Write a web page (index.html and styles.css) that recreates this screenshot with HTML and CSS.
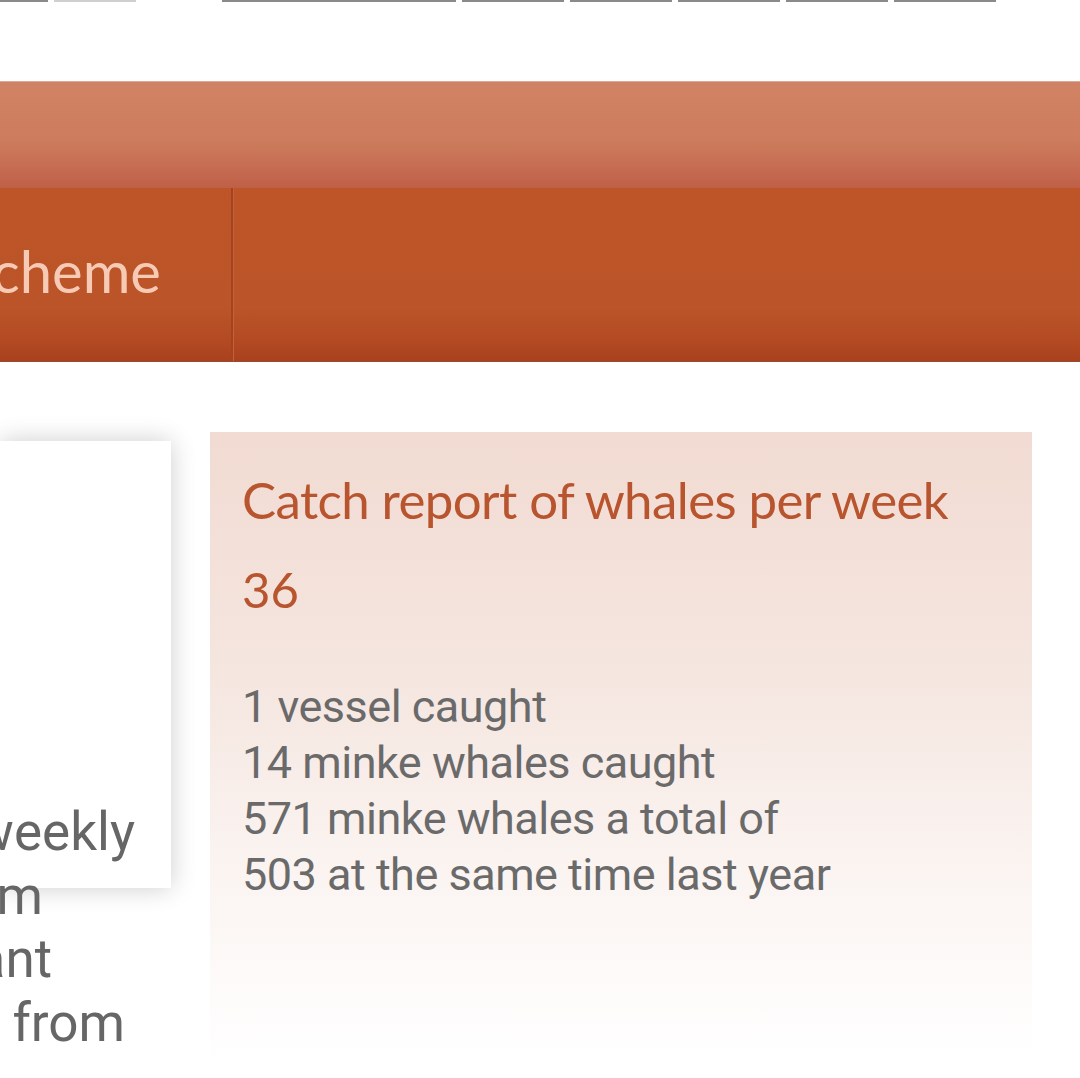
FILE: index.html
```html
<!DOCTYPE html>
<html lang="en">
<head>
<meta charset="utf-8">
<title>Catch report</title>
<link rel="stylesheet" href="styles.css">
</head>
<body>
<div class="topstrip">
  <span class="tab t1"></span>
  <span class="tab t2"></span>
  <span class="tab t3"></span>
  <span class="tab t4"></span>
  <span class="tab t4"></span>
  <span class="tab t4"></span>
  <span class="tab t4"></span>
  <span class="tab t4"></span>
</div>
<header class="banner">
  <div class="banner-top"></div>
  <nav class="navbar">
    <div class="nav-item"><span class="nav-label">Whaling scheme</span></div>
    <div class="nav-rest"></div>
  </nav>
</header>
<main class="main">
  <div class="card">
    <div class="card-text">
      <div class="line l1">The Directorate publishes weekly</div>
      <div class="line l2">reports on the catch from</div>
      <div class="line l3">whaling. This is important</div>
      <div class="line l4">information about quotas from</div>
    </div>
  </div>
  <section class="report">
    <h2 class="report-title">Catch report of whales per week</h2>
    <div class="report-week">36</div>
    <ul class="report-list">
      <li>1 vessel caught</li>
      <li>14 minke whales caught</li>
      <li>571 minke whales a total of</li>
      <li>503 at the same time last year</li>
    </ul>
  </section>
</main>
</body>
</html>
```
FILE: styles.css
```css
html, body {
  margin: 0;
  padding: 0;
  background: #ffffff;
  overflow: hidden;
}
body {
  width: 1080px;
  height: 1078px;
  font-family: Roboto, "Liberation Sans", sans-serif;
}
.topstrip {
  height: 81px;
  display: flex;
  align-items: flex-start;
  gap: 6px;
}
.tab {
  display: block;
  height: 2px;
  background: #8a8a8a;
}
.t1 { width: 48px; }
.t2 { width: 82px; background: #cfcfcf; margin-right: 80px; }
.t3 { width: 234px; }
.t4 { width: 102px; }

.banner {
  height: 281px;
  display: flex;
  flex-direction: column;
}
.banner-top {
  height: 106px;
  border-top: 1px solid #d9ab94;
  background: linear-gradient(to bottom, #d08364 0%, #cd7c5d 55%, #c76e54 78%, #bf5f48 100%);
}
.navbar {
  flex: 1;
  display: flex;
  background: linear-gradient(to bottom, #bd5528 0%, #bb5428 70%, #b34a24 88%, #a9411e 100%);
  border-bottom: 1px solid #9b4a30;
}
.nav-item {
  width: 233px;
  display: flex;
  align-items: center;
  justify-content: flex-end;
  padding-right: 70px;
  box-sizing: border-box;
  border-right: 2px solid #a5431f;
  box-shadow: 1px 0 0 #c4603a;
  white-space: nowrap;
}
.nav-label {
  font-family: Lato, "Open Sans", sans-serif;
  font-size: 58px;
  color: #f6cab5;
  padding-bottom: 8px;
}
.nav-rest { flex: 1; }

.main {
  display: flex;
  align-items: flex-start;
  gap: 39px;
  padding-top: 70px;
}
.card {
  width: 171px;
  height: 447px;
  margin-top: 9px;
  flex: none;
  background: #ffffff;
  box-shadow: 0 0 24px rgba(0, 0, 0, 0.2);
}
.card-text {
  padding-top: 360px;
  font-size: 53px;
  line-height: 63.5px;
  color: #666666;
}
.line {
  display: flex;
  justify-content: flex-end;
  white-space: nowrap;
}
.l1 { padding-right: 36px; }
.l2 { padding-right: 128px; }
.l3 { padding-right: 119px; }
.l4 { padding-right: 46px; }

.report {
  width: 822px;
  height: 628px;
  box-sizing: border-box;
  padding: 36px 32px 0;
  background: linear-gradient(to bottom, #f1dbd2 0%, #f5e6e0 40%, #faf2ef 65%, #ffffff 100%);
}
.report-title {
  margin: 0;
  font-family: Lato, "Open Sans", sans-serif;
  font-weight: 400;
  font-size: 51px;
  letter-spacing: -0.6px;
  line-height: 64px;
  color: #b8552e;
}
.report-week {
  font-family: Lato, "Open Sans", sans-serif;
  font-size: 49px;
  line-height: 64px;
  margin-top: 25px;
  color: #b8552e;
}
.report-list {
  list-style: none;
  margin: 58px 0 0;
  padding: 0;
  font-size: 45px;
  letter-spacing: -0.5px;
  line-height: 56px;
  color: #6a6a6a;
}
```
